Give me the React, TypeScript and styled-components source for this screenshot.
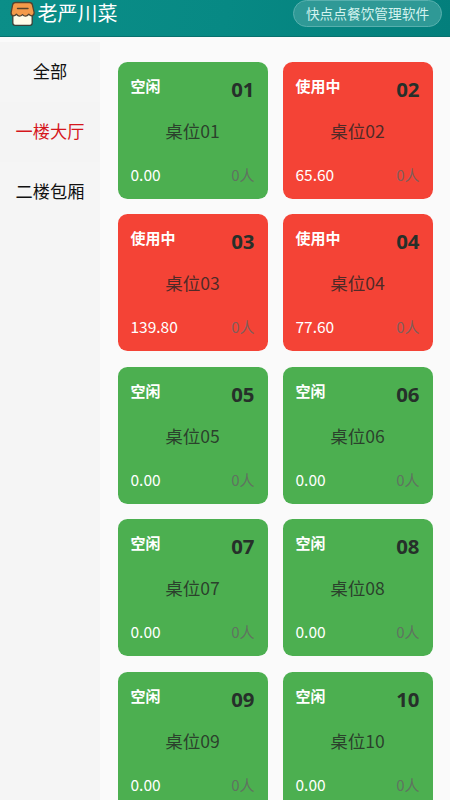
import React from "react";
import styled, { createGlobalStyle } from "styled-components";

const GlobalStyle = createGlobalStyle`
  * { box-sizing: border-box; }
  body {
    margin: 0;
    background: #fafafa;
    font-family: "Noto Sans CJK SC", "Noto Sans", sans-serif;
  }
`;

const Page = styled.div`
  width: 450px;
  height: 800px;
  overflow: hidden;
  display: flex;
  flex-direction: column;
  background: #fafafa;
`;

const Header = styled.header`
  flex: none;
  height: 37px;
  padding: 0 8px;
  display: flex;
  justify-content: space-between;
  align-items: flex-start;
  background: linear-gradient(100deg, #0b8e88 0%, #078984 50%, #037f7c 100%);
  border-bottom: 1px solid #08716e;
`;

const Brand = styled.div`
  display: flex;
  height: 27px;
  align-items: flex-start;
  gap: 2.5px;
`;

const Title = styled.h1`
  margin: 0;
  font-size: 20px;
  line-height: 26px;
  font-weight: 400;
  color: #fff;
`;

const Product = styled.div`
  width: 149px;
  height: 27px;
  border-radius: 14px;
  border: 1px solid #58b0ae;
  background: #2f9996;
  color: #d3f3ef;
  font-size: 13.7px;
  line-height: 25px;
  text-align: center;
  white-space: nowrap;
`;

const Body = styled.main`
  flex: 1;
  min-height: 0;
  display: flex;
  padding-top: 5px;
`;

const Sidebar = styled.nav`
  flex: none;
  width: 100px;
  background: #f5f5f5;
  display: flex;
  flex-direction: column;
`;

const Area = styled.div<{ $active?: boolean }>`
  height: 60px;
  line-height: 57px;
  text-align: center;
  font-size: 17.2px;
  color: ${(p) => (p.$active ? "#d5161c" : "#111")};
  background: ${(p) => (p.$active ? "#f4f4f4" : "transparent")};
`;

const Grid = styled.section`
  display: grid;
  grid-template-columns: 150px 150px;
  grid-auto-rows: 137px;
  column-gap: 15px;
  row-gap: 15.5px;
  padding: 19.8px 0 0 17.5px;
`;

const Card = styled.article<{ $busy: boolean }>`
  border-radius: 9.5px;
  padding: 12px 13px;
  background: ${(p) => (p.$busy ? "#f44336" : "#4caf50")};
  display: flex;
  flex-direction: column;
  justify-content: space-between;
`;

const Row = styled.div`
  display: flex;
  justify-content: space-between;
  height: 24px;
  line-height: 24px;
  white-space: nowrap;
`;

const Status = styled.span`
  font-size: 15px;
  font-weight: 700;
  color: #fff;
`;

const Num = styled.span`
  font-family: "Noto Sans", sans-serif;
  font-size: 20.4px;
  font-weight: 700;
  line-height: 30px;
  color: #26302a;
`;

const Name = styled.div`
  text-align: center;
  font-size: 17.6px;
  line-height: 23px;
  color: rgba(35, 35, 35, 0.8);
`;

const Amount = styled.span`
  font-size: 15.5px;
  line-height: 23px;
  color: #fff;
`;

const Guests = styled.span`
  font-size: 15px;
  color: rgba(100, 100, 100, 0.8);
`;

const areas = ["全部", "一楼大厅", "二楼包厢"];

const tables = [
  { no: "01", amount: "0.00", busy: false },
  { no: "02", amount: "65.60", busy: true },
  { no: "03", amount: "139.80", busy: true },
  { no: "04", amount: "77.60", busy: true },
  { no: "05", amount: "0.00", busy: false },
  { no: "06", amount: "0.00", busy: false },
  { no: "07", amount: "0.00", busy: false },
  { no: "08", amount: "0.00", busy: false },
  { no: "09", amount: "0.00", busy: false },
  { no: "10", amount: "0.00", busy: false },
];

const ShopIcon = () => (
  <svg width="27" height="27" viewBox="0 0 27 27">
    <path
      d="M4.800 14v9q0 2.300 2.300 2.300h14.800q2.300 0 2.300-2.300v-9z"
      fill="#fffbe8"
      stroke="#3b4038"
      strokeWidth="1.300"
    />
    <path
      d="M7.500 2.500h14q2.400 0 2.900 2.300l1.700 7.500q.3 3-2.400 3.500-1.500 0-2.900-1.500-1.600 1.800-3.300 1.800t-3-1.500q-1.500 1.500-3 1.500t-3.100-1.800q-1.300 1.500-2.800 1.500-2.900-.5-2.400-3.500L4.600 4.800q.5-2.300 2.900-2.300z"
      fill="#f49a4a"
      stroke="#54432f"
      strokeWidth="1.300"
      strokeLinejoin="round"
    />
    <path d="M9.500 8.500h10.500" stroke="#54432f" strokeWidth="1.400" strokeLinecap="round" />
  </svg>
);

export default function App() {
  return (
    <Page>
      <GlobalStyle />
      <Header>
        <Brand>
          <ShopIcon />
          <Title>老严川菜</Title>
        </Brand>
        <Product>快点点餐饮管理软件</Product>
      </Header>
      <Body>
        <Sidebar>
          {areas.map((a) => (
            <Area key={a} $active={a === "一楼大厅"}>
              {a}
            </Area>
          ))}
        </Sidebar>
        <Grid>
          {tables.map((t) => (
            <Card key={t.no} $busy={t.busy}>
              <Row>
                <Status>{t.busy ? "使用中" : "空闲"}</Status>
                <Num>{t.no}</Num>
              </Row>
              <Name>桌位{t.no}</Name>
              <Row>
                <Amount>{t.amount}</Amount>
                <Guests>0人</Guests>
              </Row>
            </Card>
          ))}
        </Grid>
      </Body>
    </Page>
  );
}
